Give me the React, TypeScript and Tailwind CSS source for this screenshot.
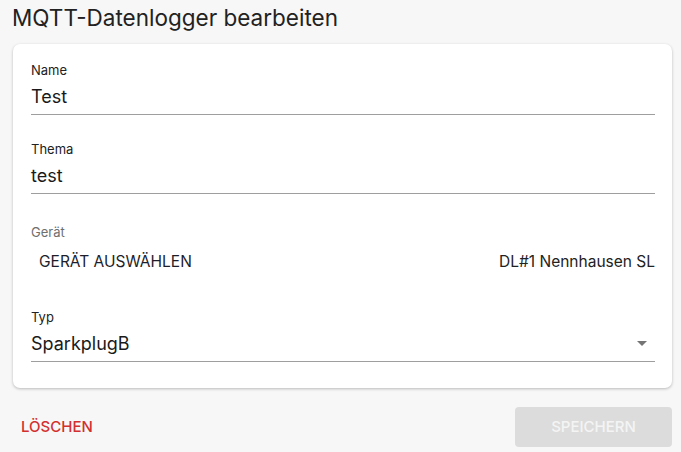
const Field = ({ label, value, select }: { label: string; value: string; select?: boolean }) => (
  <div className="flex flex-col">
    <div className="h-4 text-[13px] leading-4 text-[#222]">{label}</div>
    <div className="flex h-[37px] items-center justify-between border-b border-[#9e9e9e] text-[18px] text-[#1a1a1a]">
      <span>{value}</span>
      {select && (
        <svg width="10" height="5" viewBox="0 0 10 5" className="mr-[8px]">
          <path d="M0 0 L10 0 L5 5 Z" fill="#757575" />
        </svg>
      )}
    </div>
  </div>
);

const App = () => {
  return (
    <div
      className="h-[452px] w-[681px] bg-[#f7f7f7] pl-3 pr-[9px]"
      style={{ fontFamily: "Inter, 'Noto Sans', sans-serif" }}
    >
      <div className="flex h-[44px] items-start pt-[4px] text-[22.5px] leading-[28px] text-[#222]">
        MQTT-Datenlogger bearbeiten
      </div>

      <div className="ml-[1px] flex flex-col rounded-[7px] bg-white pl-[18px] pr-[17px] pb-[26px] pt-[18px] shadow-[0_1px_3px_rgba(0,0,0,0.25)]">
        <Field label="Name" value="Test" />
        <div className="h-[26px]" />
        <Field label="Thema" value="test" />
        <div className="h-[30px]" />
        <div className="h-4 text-[13px] leading-4 text-[#6f6f6f]">Gerät</div>
        <div className="mt-1 flex h-9 items-center justify-between">
          <button className="px-2 text-[15.5px] uppercase text-[#1e1e2a]">Gerät auswählen</button>
          <span className="text-[15.5px] text-[#222]">DL#1 Nennhausen SL</span>
        </div>
        <div className="h-[29px]" />
        <Field label="Typ" value="SparkplugB" select />
      </div>

      <div className="mt-[19px] flex items-center justify-between">
        <button className="ml-[1px] h-10 px-2 text-[15px] font-medium text-[#d32f2f]">LÖSCHEN</button>
        <button className="h-10 w-[157px] rounded-[4px] bg-[#dcdcdc] text-[15px] font-medium text-[#f4f4f4]">
          SPEICHERN
        </button>
      </div>
    </div>
  );
};

export default App;
